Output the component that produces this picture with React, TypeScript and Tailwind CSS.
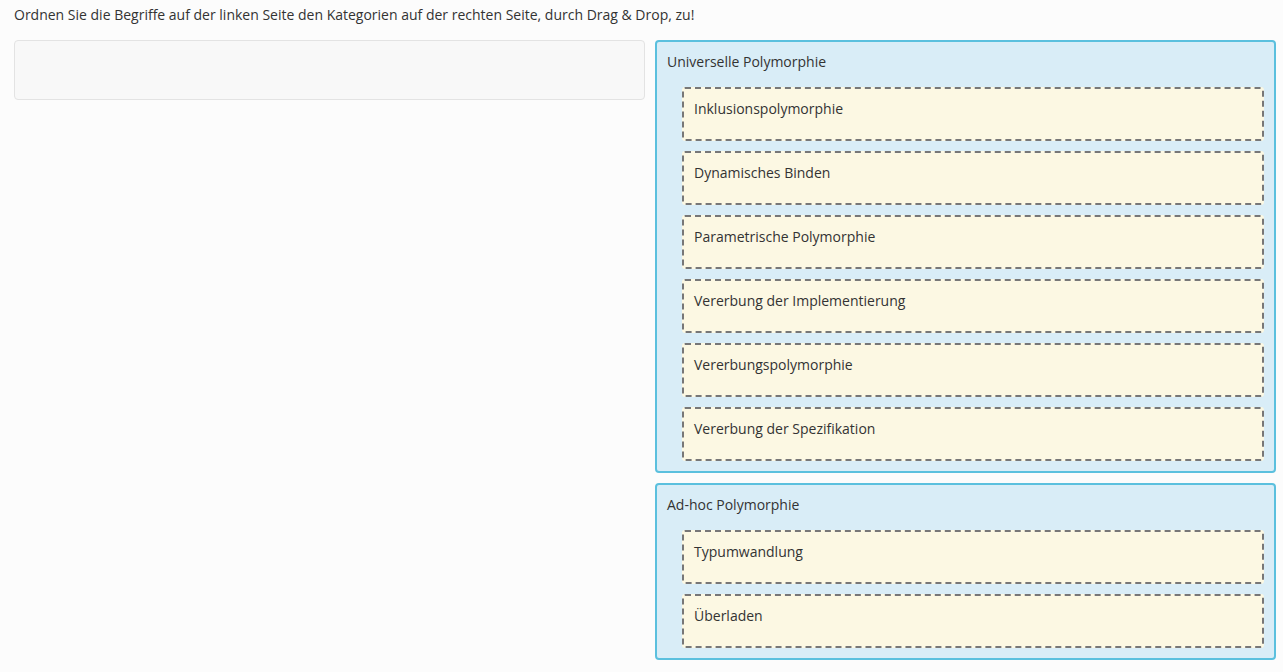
const categories = [
  {
    title: "Universelle Polymorphie",
    items: [
      "Inklusionspolymorphie",
      "Dynamisches Binden",
      "Parametrische Polymorphie",
      "Vererbung der Implementierung",
      "Vererbungspolymorphie",
      "Vererbung der Spezifikation",
    ],
  },
  {
    title: "Ad-hoc Polymorphie",
    items: ["Typumwandlung", "Überladen"],
  },
];

function Category({ title, items }: { title: string; items: string[] }) {
  return (
    <div className="rounded-[4px] border-2 border-[#5bc0de] bg-[#d9edf7] px-[10px] pt-[10px] pb-[10px]">
      <div className="h-[20px] leading-[20px]">{title}</div>
      <div className="mt-[15px] flex flex-col gap-[10px] pl-[15px]">
        {items.map((it) => (
          <div
            key={it}
            className="h-[54px] rounded-[3px] border-2 border-dashed border-[#777] bg-[#fcf8e3] px-[10px] pt-[10px] leading-[20px]"
          >
            {it}
          </div>
        ))}
      </div>
    </div>
  );
}

export default function App() {
  return (
    <div
      className="min-h-[672px] bg-[#fcfcfc] px-[14px] pt-[5px] text-[14px] text-[#333]"
      style={{ fontFamily: '"Open Sans", "Liberation Sans", sans-serif' }}
    >
      <p className="leading-[20px]">
        Ordnen Sie die Begriffe auf der linken Seite den Kategorien auf der rechten Seite, durch Drag &amp; Drop, zu!
      </p>
      <div className="mt-[15px] flex gap-[10px]">
        <div className="w-[631px] shrink-0">
          <div className="h-[60px] rounded-[4px] border border-[#e3e3e3] bg-[#f8f8f8]" />
        </div>
        <div className="flex w-[621px] shrink-0 flex-col gap-[10px]">
          {categories.map((c) => (
            <Category key={c.title} title={c.title} items={c.items} />
          ))}
        </div>
      </div>
    </div>
  );
}
